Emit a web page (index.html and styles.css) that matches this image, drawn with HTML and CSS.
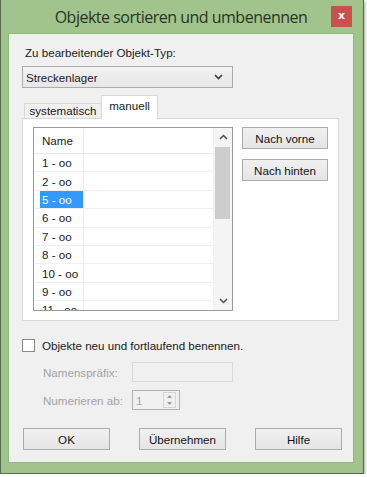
FILE: index.html
```html
<!DOCTYPE html>
<html lang="de">
<head>
    <meta charset="UTF-8">
    <title>Objekte sortieren und umbenennen</title>
    <link rel="stylesheet" href="styles.css">
</head>
<body>
    <div class="window">
        <div class="titlebar">
            <span></span>
            <span class="title">Objekte sortieren und umbenennen</span>
            <span class="close">x</span>
        </div>

        <div class="client">
            <div class="lbl">Zu bearbeitender Objekt-Typ:</div>
            <div class="combo">
                <span>Streckenlager</span>
                <svg width="9" height="6" viewBox="0 0 9 6"><polyline points="1,1 4.5,4.5 8,1" fill="none" stroke="#3a3a3a" stroke-width="1.6"/></svg>
            </div>

            <div class="tabs">
                <span class="tab">systematisch</span>
                <span class="tab active">manuell</span>
            </div>
            <div class="panel">
                <div class="list">
                    <div class="list-body">
                        <div class="row hdr"><span class="c1">Name</span><span class="c2"></span></div>
                        <div class="row"><span class="c1"><span class="item">1 - oo</span></span><span class="c2"></span></div>
                        <div class="row"><span class="c1"><span class="item">2 - oo</span></span><span class="c2"></span></div>
                        <div class="row"><span class="c1"><span class="item sel">5 - oo</span></span><span class="c2"></span></div>
                        <div class="row"><span class="c1"><span class="item">6 - oo</span></span><span class="c2"></span></div>
                        <div class="row"><span class="c1"><span class="item">7 - oo</span></span><span class="c2"></span></div>
                        <div class="row"><span class="c1"><span class="item">8 - oo</span></span><span class="c2"></span></div>
                        <div class="row"><span class="c1"><span class="item">10 - oo</span></span><span class="c2"></span></div>
                        <div class="row"><span class="c1"><span class="item">9 - oo</span></span><span class="c2"></span></div>
                        <div class="row"><span class="c1"><span class="item">11 - oo</span></span><span class="c2"></span></div>
                    </div>
                    <div class="vscroll">
                        <div class="arrow">
                            <svg width="9" height="6" viewBox="0 0 9 6"><polyline points="1,5 4.5,1.5 8,5" fill="none" stroke="#505050" stroke-width="1.5"/></svg>
                        </div>
                        <div class="thumb"></div>
                        <div class="track"></div>
                        <div class="arrow">
                            <svg width="9" height="6" viewBox="0 0 9 6"><polyline points="1,1 4.5,4.5 8,1" fill="none" stroke="#505050" stroke-width="1.5"/></svg>
                        </div>
                    </div>
                </div>
                <div class="side-buttons">
                    <button type="button">Nach vorne</button>
                    <button type="button">Nach hinten</button>
                </div>
            </div>

            <div class="check-row">
                <span class="checkbox"></span>
                <span>Objekte neu und fortlaufend benennen.</span>
            </div>
            <div class="field-row">
                <span class="field-label">Namenspräfix:</span>
                <span class="textbox"></span>
            </div>
            <div class="field-row spin-row">
                <span class="field-label">Numerieren ab:</span>
                <span class="spinner">
                    <span class="spin-value">1</span>
                    <span class="spin-btns">
                        <span class="spin-btn"><svg width="5" height="3" viewBox="0 0 5 3"><polygon points="0,3 2.5,0 5,3" fill="#9a9a9a"/></svg></span>
                        <span class="spin-btn"><svg width="5" height="3" viewBox="0 0 5 3"><polygon points="0,0 2.5,3 5,0" fill="#9a9a9a"/></svg></span>
                    </span>
                </span>
            </div>

            <div class="dialog-buttons">
                <button type="button">OK</button>
                <button type="button">Übernehmen</button>
                <button type="button">Hilfe</button>
            </div>
        </div>
    </div>
</body>
</html>
```

FILE: styles.css
```css
* {
    box-sizing: border-box;
}
body {
    margin: 0;
    background: #fff;
    font-family: "Liberation Sans", Arial, sans-serif;
    font-size: 11.6px;
    color: #1a1a1a;
}
.window {
    width: 364px;
    height: 474px;
    background: #a0c48b;
    border: 1px solid #58684e;
    border-top: none;
    padding: 0 9px 0 7px;
    box-shadow: 1px 1px 3px rgba(0, 0, 0, 0.35);
}
.titlebar {
    height: 33px;
    display: grid;
    grid-template-columns: 1fr auto 1fr;
    align-items: start;
}
.title {
    font-family: "Open Sans", "Noto Sans", sans-serif;
    font-size: 16px;
    letter-spacing: -0.5px;
    line-height: 22px;
    padding-top: 6px;
    color: #2b3328;
    white-space: nowrap;
}
.close {
    justify-self: end;
    margin: 6px 2px 0 0;
    width: 21px;
    height: 21px;
    background: #c8504e;
    color: #fff;
    font-family: "DejaVu Sans", sans-serif;
    font-weight: bold;
    font-size: 11px;
    line-height: 19px;
    text-align: center;
}
.client {
    height: 430px;
    background: #f0f0f0;
    border: 1px solid #8fb679;
    padding: 12px 0 0 13px;
}
.lbl {
    line-height: 14px;
    margin-left: 3px;
}
.combo {
    margin-top: 6px;
    width: 211px;
    height: 22px;
    border: 1px solid #acacac;
    background: linear-gradient(#f2f2f2, #e6e6e6);
    display: flex;
    align-items: center;
    justify-content: space-between;
    padding: 0 9px 0 3px;
}
.tabs {
    margin: 7px 0 -1px 2px;
    height: 24px;
    display: flex;
    align-items: flex-end;
}
.tab {
    height: 15px;
    margin-bottom: 1px;
    width: 77px;
    line-height: 13px;
    text-align: center;
    background: #f0f0f0;
    border: 1px solid #d9d9d9;
    border-right: none;
    border-bottom: none;
}
.tab.active {
    position: relative;
    z-index: 1;
    height: 24px;
    margin-bottom: 0;
    width: 57px;
    line-height: 14px;
    padding-top: 3px;
    background: #fff;
    border-right: 1px solid #d9d9d9;
}
.panel {
    width: 317px;
    height: 203px;
    background: #fff;
    border: 1px solid #d9d9d9;
    padding: 8px 0 0 10px;
    display: flex;
    align-items: flex-start;
}
.list {
    width: 200px;
    height: 184px;
    border: 1px solid #9a9a9a;
    display: flex;
    overflow: hidden;
}
.list-body {
    width: 179px;
    overflow: hidden;
}
.row {
    height: 18.4px;
    display: flex;
    border-bottom: 1px solid #f0f0f0;
}
.row.hdr {
    height: 26px;
    border-bottom-color: #e8e8e8;
    align-items: center;
}
.c1 {
    width: 50px;
    flex: none;
    border-right: 1px solid #ececec;
    display: flex;
    align-items: center;
}
.hdr .c1 {
    height: 100%;
    padding-left: 8px;
}
.c2 {
    flex: 1;
}
.item {
    margin-left: 6px;
    width: 44px;
    height: 17px;
    line-height: 17px;
    padding-left: 2px;
    white-space: nowrap;
}
.item.sel {
    background: #3399ff;
    color: #fff;
}
.vscroll {
    width: 19px;
    background: #f4f4f4;
    display: flex;
    flex-direction: column;
    border-left: 1px solid #f0f0f0;
}
.arrow {
    height: 18px;
    display: flex;
    align-items: center;
    justify-content: center;
}
.thumb {
    margin: 1px 2px 0 1px;
    height: 72px;
    background: #cdcdcd;
}
.track {
    flex: 1;
}
.side-buttons {
    margin-left: 9px;
    display: flex;
    flex-direction: column;
    gap: 10px;
}
button {
    font-family: "Liberation Sans", Arial, sans-serif;
    font-size: 11.6px;
    color: #111;
    height: 22px;
    border: 1px solid #acacac;
    background: linear-gradient(#f0f0f0, #e5e5e5);
    padding: 0;
}
.side-buttons button {
    width: 86px;
}
.check-row {
    margin-top: 17px;
    height: 14px;
    display: flex;
    align-items: center;
    gap: 7px;
}
.checkbox {
    width: 13px;
    height: 13px;
    border: 1px solid #8a8a8a;
    background: #fff;
}
.field-row {
    margin-top: 10px;
    margin-left: 21px;
    height: 20px;
    display: flex;
    align-items: center;
    color: #a3a3a3;
}
.spin-row {
    margin-top: 8px;
}
.field-label {
    width: 89px;
}
.textbox {
    width: 101px;
    height: 20px;
    border: 1px solid #d9d9d9;
}
.spinner {
    width: 48px;
    height: 20px;
    border: 1px solid #b4b4b4;
    display: flex;
    align-items: center;
    justify-content: space-between;
    padding: 0 3px 0 3px;
}
.spin-btns {
    width: 13px;
    height: 16px;
    border: 1px solid #d4d4d4;
    display: flex;
    flex-direction: column;
}
.spin-btn {
    flex: 1;
    display: flex;
    align-items: center;
    justify-content: center;
}
.dialog-buttons {
    margin: 18px 0 0 1px;
    display: flex;
    gap: 29px;
}
.dialog-buttons button {
    width: 87px;
}
```
